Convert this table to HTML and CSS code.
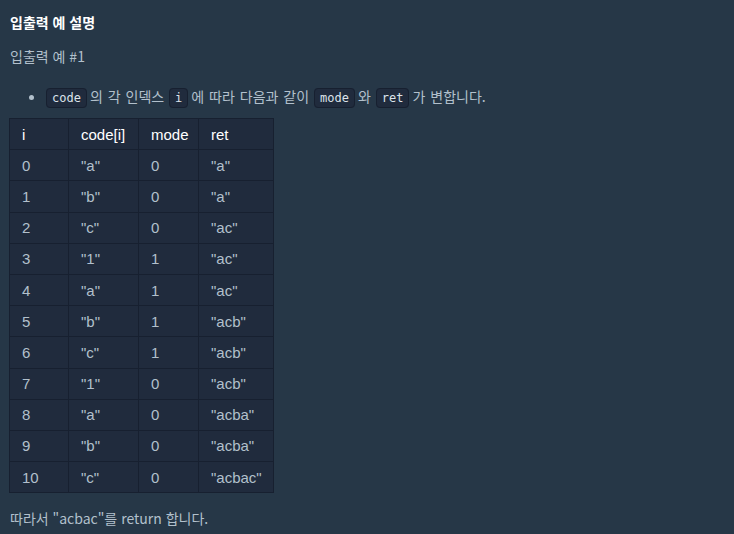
FILE: index.html
```html
<!DOCTYPE html>
<html lang="ko">
<head>
<meta charset="utf-8">
<link rel="stylesheet" href="styles.css">
</head>
<body>
<div class="guide">
  <h5 class="title">입출력 예 설명</h5>
  <p class="sub">입출력 예 #1</p>
  <ul class="list">
    <li><code>code</code>의 각 인덱스 <code>i</code>에 따라 다음과 같이 <code>mode</code>와 <code>ret</code>가 변합니다.</li>
  </ul>
  <table class="tbl">
    <thead>
      <tr><th class="c1">i</th><th class="c2">code[i]</th><th class="c3">mode</th><th class="c4">ret</th></tr>
    </thead>
    <tbody>
      <tr><td>0</td><td>"a"</td><td>0</td><td>"a"</td></tr>
      <tr><td>1</td><td>"b"</td><td>0</td><td>"a"</td></tr>
      <tr><td>2</td><td>"c"</td><td>0</td><td>"ac"</td></tr>
      <tr><td>3</td><td>"1"</td><td>1</td><td>"ac"</td></tr>
      <tr><td>4</td><td>"a"</td><td>1</td><td>"ac"</td></tr>
      <tr><td>5</td><td>"b"</td><td>1</td><td>"acb"</td></tr>
      <tr><td>6</td><td>"c"</td><td>1</td><td>"acb"</td></tr>
      <tr><td>7</td><td>"1"</td><td>0</td><td>"acb"</td></tr>
      <tr><td>8</td><td>"a"</td><td>0</td><td>"acba"</td></tr>
      <tr><td>9</td><td>"b"</td><td>0</td><td>"acba"</td></tr>
      <tr><td>10</td><td>"c"</td><td>0</td><td>"acbac"</td></tr>
    </tbody>
  </table>
  <p class="result">따라서 "acbac"를 return 합니다.</p>
</div>
</body>
</html>
```

FILE: styles.css
```css
html, body {
  margin: 0;
  padding: 0;
  background: #263747;
}
body {
  font-family: "Noto Sans CJK KR", "Noto Sans", sans-serif;
  font-size: 14px;
  color: #b2c0cc;
}
.guide {
  padding: 10px 10px 0 10px;
}
.title {
  margin: 0;
  font-size: 14px;
  line-height: 24px;
  font-weight: 700;
  color: #ffffff;
}
.sub {
  margin: 10px 0 0 0;
  line-height: 24px;
}
.list {
  margin: 16px 0 0 0;
  padding-left: 36px;
  line-height: 24px;
  word-spacing: 1px;
}
code {
  font-family: "DejaVu Sans Mono", monospace;
  font-size: 12px;
  word-spacing: 0;
  background: #202b3d;
  border: 1px solid #172030;
  border-radius: 4px;
  padding: 2px 5px;
  margin: 0 3px 0 0;
  color: #dce3ea;
}
.tbl {
  margin-top: 8px;
  margin-left: -1px;
  border-collapse: collapse;
  background: #202b3d;
  font-family: "Liberation Sans", Arial, sans-serif;
  font-size: 15px;
  table-layout: fixed;
  width: 264px;
}
.tbl th, .tbl td {
  box-sizing: border-box;
  border: 1px solid #172030;
  height: 31.2px;
  padding: 0 0 0 12px;
  text-align: left;
  font-weight: 400;
  color: #b2c0cc;
}
.tbl th {
  color: #ffffff;
}
.c1 { width: 59px; }
.c2 { width: 70px; }
.c3 { width: 60px; }
.c4 { width: 75px; }
.result {
  margin: 13px 0 0 0;
  line-height: 24px;
}
```
